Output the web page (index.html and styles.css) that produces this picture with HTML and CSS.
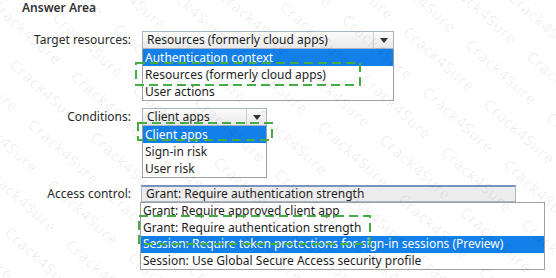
FILE: index.html
```html
<!DOCTYPE html>
<html>
<head>
    <title>Answer Area</title>
    <link rel="stylesheet" href="styles.css">
</head>
<body>
    <div class="answer">
        <h2 class="title">Answer Area</h2>

        <div class="field field-target">
            <span class="label">Target resources:</span>
            <div class="dropdown drop-target">
                <div class="select">
                    <span class="value">Resources (formerly cloud apps)</span>
                    <span class="arrow-box"></span>
                </div>
                <ul class="options">
                    <li class="on">Authentication context</li>
                    <li>Resources (formerly cloud apps)</li>
                    <li>User actions</li>
                </ul>
                <svg class="mark mark-target" width="226" height="24"><rect x="1" y="1" width="224" height="22"/></svg>
            </div>
        </div>

        <div class="field field-cond">
            <span class="label">Conditions:</span>
            <div class="dropdown drop-cond">
                <div class="select">
                    <span class="value">Client apps</span>
                    <span class="arrow-box"></span>
                </div>
                <ul class="options">
                    <li class="on">Client apps</li>
                    <li>Sign-in risk</li>
                    <li>User risk</li>
                </ul>
                <svg class="mark mark-cond" width="136" height="19"><rect x="1" y="1" width="134" height="17"/></svg>
            </div>
        </div>

        <div class="field field-access">
            <span class="label">Access control:</span>
            <div class="dropdown drop-access">
                <div class="select select-focus">
                    <span class="value">Grant: Require authentication strength</span>
                </div>
                <ul class="options">
                    <li>Grant: Require approved client app</li>
                    <li>Grant: Require authentication strength</li>
                    <li class="on">Session: Require token protections for sign-in sessions (Preview)</li>
                    <li>Session: Use Global Secure Access security profile</li>
                </ul>
                <svg class="mark mark-access" width="233" height="30"><rect x="1" y="1" width="231" height="28"/></svg>
            </div>
        </div>

        <!-- faint watermark over the whole picture -->
        <div class="watermark">
            <div class="wm-lines">
                <p>Crack4Sure Crack4Sure Crack4Sure Crack4Sure Crack4Sure Crack4Sure Crack4Sure Crack4Sure</p>
                <p>Sure Crack4Sure Crack4Sure Crack4Sure Crack4Sure Crack4Sure Crack4Sure Crack4Sure</p>
                <p>Crack4Sure Crack4Sure Crack4Sure Crack4Sure Crack4Sure Crack4Sure Crack4Sure Crack4Sure</p>
                <p>Sure Crack4Sure Crack4Sure Crack4Sure Crack4Sure Crack4Sure Crack4Sure Crack4Sure</p>
                <p>Crack4Sure Crack4Sure Crack4Sure Crack4Sure Crack4Sure Crack4Sure Crack4Sure Crack4Sure</p>
                <p>Sure Crack4Sure Crack4Sure Crack4Sure Crack4Sure Crack4Sure Crack4Sure Crack4Sure</p>
                <p>Crack4Sure Crack4Sure Crack4Sure Crack4Sure Crack4Sure Crack4Sure Crack4Sure Crack4Sure</p>
                <p>Sure Crack4Sure Crack4Sure Crack4Sure Crack4Sure Crack4Sure Crack4Sure Crack4Sure</p>
                <p>Crack4Sure Crack4Sure Crack4Sure Crack4Sure Crack4Sure Crack4Sure Crack4Sure Crack4Sure</p>
                <p>Sure Crack4Sure Crack4Sure Crack4Sure Crack4Sure Crack4Sure Crack4Sure Crack4Sure</p>
                <p>Crack4Sure Crack4Sure Crack4Sure Crack4Sure Crack4Sure Crack4Sure Crack4Sure Crack4Sure</p>
                <p>Sure Crack4Sure Crack4Sure Crack4Sure Crack4Sure Crack4Sure Crack4Sure Crack4Sure</p>
                <p>Crack4Sure Crack4Sure Crack4Sure Crack4Sure Crack4Sure Crack4Sure Crack4Sure Crack4Sure</p>
                <p>Sure Crack4Sure Crack4Sure Crack4Sure Crack4Sure Crack4Sure Crack4Sure Crack4Sure</p>
                <p>Crack4Sure Crack4Sure Crack4Sure Crack4Sure Crack4Sure Crack4Sure Crack4Sure Crack4Sure</p>
                <p>Sure Crack4Sure Crack4Sure Crack4Sure Crack4Sure Crack4Sure Crack4Sure Crack4Sure</p>
                <p>Crack4Sure Crack4Sure Crack4Sure Crack4Sure Crack4Sure Crack4Sure Crack4Sure Crack4Sure</p>
                <p>Sure Crack4Sure Crack4Sure Crack4Sure Crack4Sure Crack4Sure Crack4Sure Crack4Sure</p>
                <p>Crack4Sure Crack4Sure Crack4Sure Crack4Sure Crack4Sure Crack4Sure Crack4Sure Crack4Sure</p>
                <p>Sure Crack4Sure Crack4Sure Crack4Sure Crack4Sure Crack4Sure Crack4Sure Crack4Sure</p>
                <p>Crack4Sure Crack4Sure Crack4Sure Crack4Sure Crack4Sure Crack4Sure Crack4Sure Crack4Sure</p>
                <p>Sure Crack4Sure Crack4Sure Crack4Sure Crack4Sure Crack4Sure Crack4Sure Crack4Sure</p>
                <p>Crack4Sure Crack4Sure Crack4Sure Crack4Sure Crack4Sure Crack4Sure Crack4Sure Crack4Sure</p>
                <p>Sure Crack4Sure Crack4Sure Crack4Sure Crack4Sure Crack4Sure Crack4Sure Crack4Sure</p>
            </div>
        </div>
    </div>
</body>
</html>
```

FILE: styles.css
```css
body {
    margin: 0;
    padding: 0;
    background-color: #fff;
    font-family: 'Noto Sans', 'Open Sans', Arial, sans-serif;
    font-size: 12px;
    color: #1e1e1e;
}

.answer {
    position: relative;
    width: 556px;
    height: 278px;
    overflow: hidden;
    box-sizing: border-box;
}

.title {
    margin: 0 0 15px 22px;
    font-size: 12px;
    line-height: 16px;
    font-weight: 600;
    color: #333;
}

.field {
    display: grid;
    grid-template-columns: 131px auto;
    column-gap: 11px;
    align-items: start;
    margin-bottom: 7px;
}

.label {
    text-align: right;
    line-height: 17px;
    color: #2a2a2a;
}

.dropdown {
    position: relative;
}

.drop-target {
    width: 252px;
}

.drop-cond {
    width: 125px;
}

.drop-access {
    width: 405px;
    margin-left: -2px;
}

.select {
    display: flex;
    align-items: center;
    height: 18px;
    box-sizing: border-box;
    border: 1px solid #a9b4c4;
    background: linear-gradient(#fbfbfb, #e9e9e9);
    padding-left: 4px;
    line-height: 16px;
    white-space: nowrap;
}

.select .value {
    flex: 1;
}

.select-focus {
    width: 375px;
    margin-left: 1px;
    border-top: 2px solid #7894bd;
    background: #ededed;
    height: 17px;
}

.arrow-box {
    display: flex;
    align-items: center;
    justify-content: center;
    width: 19px;
    height: 100%;
    border-left: 1px solid #cfcfcf;
}

.arrow-box::after {
    content: "";
    border-left: 4px solid transparent;
    border-right: 4px solid transparent;
    border-top: 5px solid #333;
}

.options {
    list-style: none;
    margin: 0;
    padding: 0;
    border: 1px solid #a0a0a0;
    border-top: none;
    background: #fff;
}

.options li {
    height: 17px;
    line-height: 17px;
    padding-left: 2px;
    white-space: nowrap;
}

.options li.on {
    background-color: #1380ea;
    color: #fff;
}

.drop-access .options {
    border-top: 1px solid #a0a0a0;
}

.drop-access .options li {
    height: 16.5px;
    line-height: 16.5px;
}

/* green dashed answer boxes */
.mark {
    position: absolute;
    overflow: visible;
}

.mark rect {
    fill: none;
    stroke: #44ad44;
    stroke-width: 2;
    stroke-dasharray: 9 5;
}

.mark-target {
    left: -7px;
    top: 31px;
}

.mark-cond {
    left: -5px;
    top: 14px;
}

.mark-access {
    left: -2px;
    top: 30px;
}

.watermark {
    position: absolute;
    inset: 0;
    pointer-events: none;
    overflow: hidden;
}

.wm-lines {
    position: absolute;
    left: -200px;
    top: -300px;
    width: 1000px;
    transform: rotate(42deg);
    transform-origin: center;
    font-family: 'Open Sans', Arial, sans-serif;
    font-size: 15px;
    color: rgba(0, 0, 0, 0.08);
    letter-spacing: 1px;
}

.wm-lines p {
    margin: 0;
    line-height: 32px;
    white-space: nowrap;
    word-spacing: 14px;
}
```
